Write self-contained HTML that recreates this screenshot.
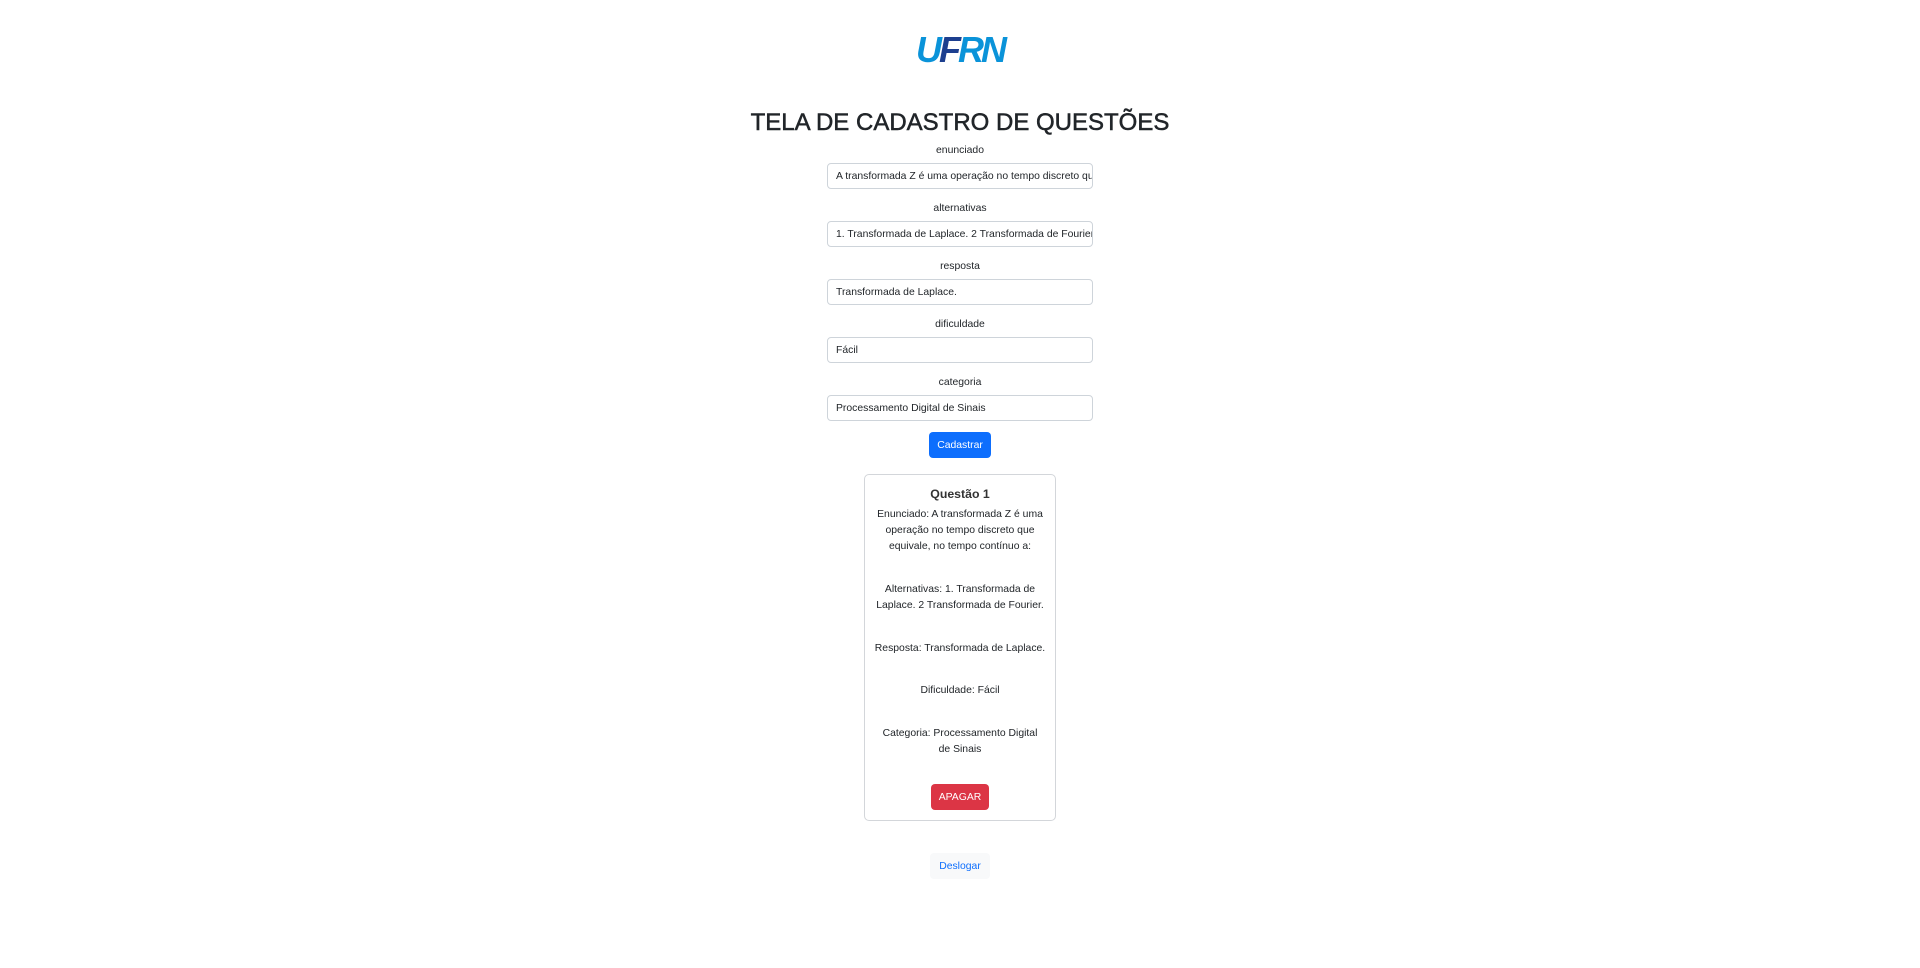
<!DOCTYPE html>
<html><head><meta charset="utf-8"><style>
*{margin:0;padding:0;box-sizing:border-box}
body{width:1920px;height:968px;background:#fff;font-family:"Liberation Sans",sans-serif;color:#212529;position:relative;overflow:hidden}
.a{position:absolute;left:0;width:1920px;text-align:center;white-space:nowrap}
.logo{top:30px;font-size:36px;font-weight:bold;font-style:italic;letter-spacing:-3px;color:#0a93d9;line-height:40px}
.logo span{color:#1d3f8f}
h1{position:absolute;left:0;width:1920px;text-align:center;top:108px;font-size:24px;font-weight:normal;line-height:30px;color:#212529;-webkit-text-stroke:0.5px #212529}
.lab{font-size:10.4px;line-height:14px}
.inp{position:absolute;left:827px;width:266px;height:26px;border:1px solid #ced4da;border-radius:4px;font-size:10.4px;line-height:24px;padding-left:8px;padding-top:1px;white-space:nowrap;overflow:hidden;color:#212529}
.btn{position:absolute;color:#fff;font-size:10.4px;text-align:center;border-radius:4px;line-height:28px;height:26px}
.card{position:absolute;left:864px;top:474px;width:192px;height:347px;border:1px solid #d3d6da;border-radius:5px}
.t{font-size:10.4px;line-height:16px}
</style></head><body>
<div class="a logo">U<span>F</span>RN</div>
<h1>TELA DE CADASTRO DE QUESTÕES</h1>
<div class="a lab" style="top:144px">enunciado</div>
<div class="inp" style="top:163px">A transformada Z é uma operação no tempo discreto que equivale</div>
<div class="a lab" style="top:202px">alternativas</div>
<div class="inp" style="top:221px">1. Transformada de Laplace. 2 Transformada de Fourier.</div>
<div class="a lab" style="top:260px">resposta</div>
<div class="inp" style="top:279px">Transformada de Laplace.</div>
<div class="a lab" style="top:318px">dificuldade</div>
<div class="inp" style="top:337px">Fácil</div>
<div class="a lab" style="top:376px">categoria</div>
<div class="inp" style="top:395px">Processamento Digital de Sinais</div>
<div class="btn" style="left:929px;top:432px;width:62px;background:#0d6efd">Cadastrar</div>
<div class="card"></div>
<div class="a" style="top:486px;font-size:12.3px;line-height:16px;font-weight:bold;color:#333">Questão 1</div>
<div class="a t" style="top:507px">Enunciado: A transformada Z é uma<br>operação no tempo discreto que<br>equivale, no tempo contínuo a:</div>
<div class="a t" style="top:582px">Alternativas: 1. Transformada de<br>Laplace. 2 Transformada de Fourier.</div>
<div class="a t" style="top:641px">Resposta: Transformada de Laplace.</div>
<div class="a t" style="top:683px">Dificuldade: Fácil</div>
<div class="a t" style="top:726px">Categoria: Processamento Digital<br>de Sinais</div>
<div class="btn" style="left:931px;top:784px;width:58px;background:#dc3545">APAGAR</div>
<div class="btn" style="left:930px;top:853px;width:60px;background:#f8f9fa;color:#0d6efd">Deslogar</div>
</body></html>
